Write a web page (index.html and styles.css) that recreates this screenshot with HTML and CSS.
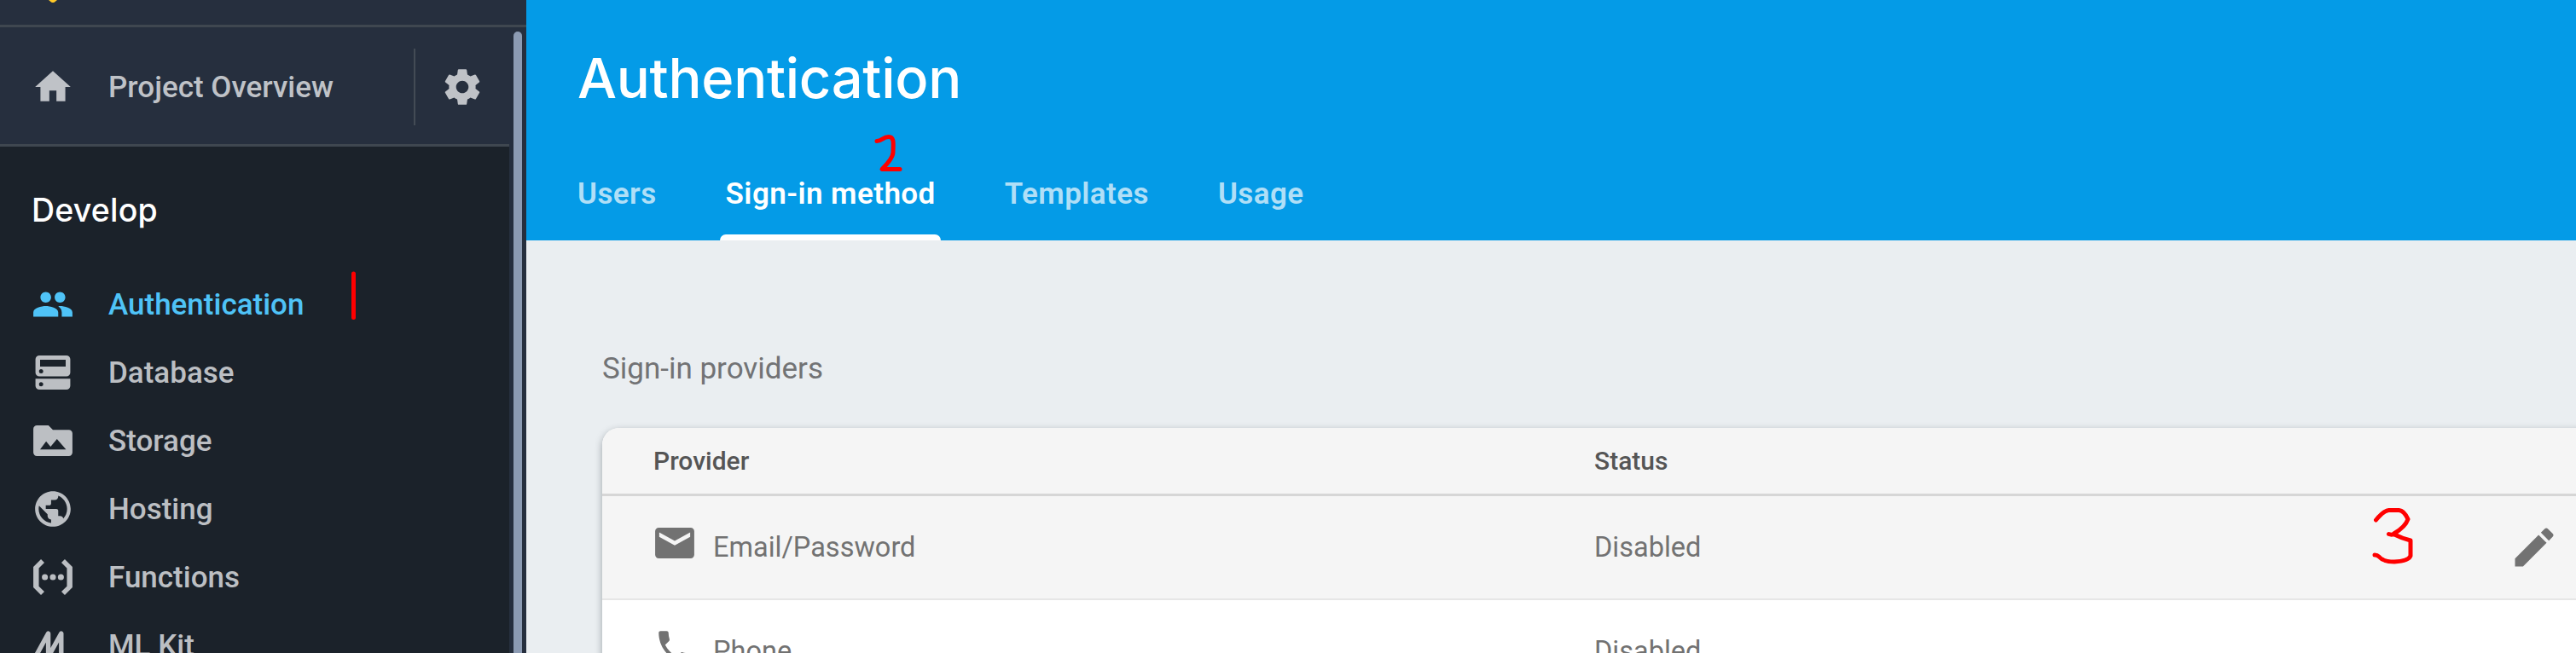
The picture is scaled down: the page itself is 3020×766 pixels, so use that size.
FILE: index.html
```html
<!DOCTYPE html>
<html lang="en">
<head>
<meta charset="utf-8">
<title>Authentication</title>
<link rel="stylesheet" href="styles.css">
</head>
<body>
<div class="app">
  <aside class="sidebar">
    <div class="brand">
      <svg class="brand-logo" viewBox="0 0 12 4"><path d="M1 0h10L8 2.4q-2 1.2-4 0z" fill="#ffc928"/></svg>
    </div>
    <div class="scroller">
      <div class="sidebar-content">
        <div class="overview">
          <svg class="icon" viewBox="0 0 24 24"><path d="M10 20v-6h4v6h5v-8h3L12 3 2 12h3v8z"/></svg>
          <span class="overview-label">Project Overview</span>
          <div class="settings">
            <svg class="icon" viewBox="0 0 24 24"><path d="M19.43 12.98c.04-.32.07-.64.07-.98s-.03-.66-.07-.98l2.11-1.65c.19-.15.24-.42.12-.64l-2-3.46c-.12-.22-.39-.3-.61-.22l-2.49 1c-.52-.4-1.08-.73-1.69-.98l-.38-2.65C14.46 2.18 14.25 2 14 2h-4c-.25 0-.46.18-.49.42l-.38 2.65c-.61.25-1.17.59-1.69.98l-2.49-1c-.23-.09-.49 0-.61.22l-2 3.46c-.13.22-.07.49.12.64l2.11 1.65c-.04.32-.07.65-.07.98s.03.66.07.98l-2.11 1.65c-.19.15-.24.42-.12.64l2 3.46c.12.22.39.3.61.22l2.49-1c.52.4 1.08.73 1.69.98l.38 2.65c.03.24.24.42.49.42h4c.25 0 .46-.18.49-.42l.38-2.65c.61-.25 1.17-.59 1.69-.98l2.49 1c.23.09.49 0 .61-.22l2-3.46c.12-.22.07-.49-.12-.64l-2.11-1.65zM12 15.5c-1.93 0-3.5-1.57-3.5-3.5s1.57-3.5 3.5-3.5 3.5 1.57 3.5 3.5-1.57 3.5-3.5 3.5z"/></svg>
          </div>
        </div>
        <h2 class="group-title">Develop</h2>
        <nav class="nav">
          <a class="nav-item active"><svg class="icon" viewBox="0 0 24 24"><path d="M16 11c1.66 0 2.99-1.34 2.99-3S17.66 5 16 5s-3 1.34-3 3 1.34 3 3 3zm-8 0c1.66 0 2.99-1.34 2.99-3S9.66 5 8 5 5 6.34 5 8s1.34 3 3 3zm0 2c-2.33 0-7 1.17-7 3.5V19h14v-2.5c0-2.33-4.67-3.5-7-3.5zm8 0c-.29 0-.62.02-.97.05 1.16.84 1.97 1.97 1.97 3.45V19h6v-2.5c0-2.33-4.67-3.5-7-3.5z"/></svg><span>Authentication</span></a>
          <a class="nav-item"><svg class="icon" viewBox="0 0 24 24"><path fill-rule="evenodd" d="M4.400 2.400h15.200a2.200 2.200 0 0 1 2.200 2.200v7.400a2.200 2.200 0 0 1-2.200 2.200H4.400a2.200 2.200 0 0 1-2.200-2.200V4.600a2.200 2.200 0 0 1 2.200-2.200zM4.800 4.800v3.800h14.400V4.800zM5.400 10.100a1.200 1.200 0 1 0 0 2.400 1.200 1.200 0 0 0 0-2.400zM2.200 15.500h19.600V19.400a2.200 2.200 0 0 1-2.200 2.200H4.400a2.200 2.200 0 0 1-2.200-2.200zM5.400 17.400a1.200 1.200 0 1 0 0 2.400 1.200 1.200 0 0 0 0-2.400z"/></svg><span>Database</span></a>
          <a class="nav-item"><svg class="icon" viewBox="0 0 24 24"><path fill-rule="evenodd" d="M3 3.400h6.500L12 5.900h9a2 2 0 0 1 2 2v10.700a2 2 0 0 1-2 2H3a2 2 0 0 1-2-2V5.400a2 2 0 0 1 2-2zM4.800 16.900h14.600l-5.100-5.800-3.600 4.300-2.500-3z"/></svg><span>Storage</span></a>
          <a class="nav-item"><svg class="icon" viewBox="0 0 24 24"><path d="M12 2C6.480 2 2 6.480 2 12s4.480 10 10 10 10-4.480 10-10S17.520 2 12 2zm-1 17.930c-3.950-.490-7-3.850-7-7.930 0-.620.080-1.210.210-1.790L9 15v1c0 1.100.900 2 2 2v1.930zm6.900-2.540c-.260-.810-1-1.390-1.900-1.390h-1v-3c0-.550-.450-1-1-1H8v-2h2c.550 0 1-.450 1-1V7h2c1.100 0 2-.900 2-2v-.410c2.930 1.190 5 4.060 5 7.410 0 2.080-.800 3.970-2.100 5.390z"/></svg><span>Hosting</span></a>
          <a class="nav-item"><svg class="icon" viewBox="0 0 24 24"><path d="M5.300 1.900 7.200 3.800 4.100 6.900v10.200l3.100 3.100-1.900 1.900L1 17.800V6.200zM18.700 1.900 16.800 3.800l3.100 3.100v10.200l-3.100 3.100 1.900 1.900 4.300-4.300V6.200z"/><circle cx="7.500" cy="12" r="1.700"/><circle cx="12" cy="12" r="1.700"/><circle cx="16.500" cy="12" r="1.700"/></svg><span>Functions</span></a>
          <a class="nav-item"><svg class="icon" viewBox="0 0 24 24"><path d="M1.800 19.200 9.400 5.300V18.500L16.700 5.300V19.500" fill="none" stroke="currentColor" stroke-width="2.600" stroke-linejoin="round" stroke-linecap="round"/></svg><span>ML Kit</span></a>
        </nav>
      </div>
      <div class="track"><div class="thumb"></div></div>
    </div>
  </aside>
  <main class="main">
    <header class="header">
      <h1 class="title">Authentication</h1>
      <div class="tabs">
        <a class="tab">Users</a>
        <a class="tab selected">Sign-in method</a>
        <a class="tab">Templates</a>
        <a class="tab">Usage</a>
      </div>
    </header>
    <section class="content">
      <h3 class="section-title">Sign-in providers</h3>
      <div class="card">
        <div class="row head"><span class="cell">Provider</span><span class="cell status">Status</span><span></span></div>
        <div class="row hovered">
          <span class="cell provider"><svg class="icon" viewBox="0 0 24 24"><path fill-rule="evenodd" d="M3 3.400h18a2 2 0 0 1 2 2v13.200a2 2 0 0 1-2 2H3a2 2 0 0 1-2-2V5.400a2 2 0 0 1 2-2zM3.300 6v2.500L12 13.300l8.700-4.800V6L12 10.800z"/></svg><span>Email/Password</span></span>
          <span class="cell status">Disabled</span>
          <svg class="edit" viewBox="0 0 24 24"><path d="M3 17.250V21h3.750L17.810 9.940l-3.750-3.750L3 17.250zM20.710 7.040c.390-.390.390-1.020 0-1.410l-2.340-2.340c-.390-.390-1.020-.390-1.410 0l-1.830 1.830 3.750 3.750 1.830-1.830z"/></svg>
        </div>
        <div class="row">
          <span class="cell provider"><svg class="icon" viewBox="0 0 24 24"><path d="M6.620 10.790c1.440 2.830 3.760 5.140 6.590 6.590l2.200-2.200c.270-.270.670-.360 1.020-.240 1.120.370 2.330.570 3.570.570.550 0 1 .450 1 1V20c0 .550-.450 1-1 1-9.390 0-17-7.610-17-17 0-.550.450-1 1-1h3.500c.550 0 1 .450 1 1 0 1.250.200 2.450.570 3.570.110.350.030.740-.250 1.020l-2.200 2.200z"/></svg><span>Phone</span></span>
          <span class="cell status">Disabled</span><span></span>
        </div>
      </div>
    </section>
  </main>
  <svg class="marks" viewBox="0 0 3020 766">
    <path d="M414.500 321v51.500"/>
    <path d="M1028 165.500c6 0 7-5 14-5 7 0 5 10 5 18 0 7-10 17-13 20h21"/>
    <path d="M2785.500 610q9-11 15-11.500h12q6 .500 10.500 10.500-3 9-16.500 17-2 2-6 .500M2806 626.500q10 5 20 7.500v18q-2 6-19 7-13 0-18-6-2-2-5-2"/>
  </svg>
</div>
</body>
</html>
```

FILE: styles.css
```css
* { box-sizing: border-box; }
body { margin: 0; font-family: Roboto, "Liberation Sans", sans-serif; overflow: hidden; }
h1, h2, h3 { margin: 0; }
.app { position: relative; display: flex; width: 3020px; height: 766px; overflow: hidden; }
.icon { width: 50px; height: 50px; fill: currentColor; flex: none; display: block; }

.sidebar { width: 617px; flex: none; display: flex; flex-direction: column; background: #262f3e; }
.brand { height: 32px; flex: none; border-bottom: 3px solid #3f4750; padding-left: 56px; }
.brand-logo { display: block; width: 12px; height: 4px; }
.scroller { flex: 1; min-height: 0; display: flex; }
.sidebar-content { width: 597px; height: 734px; overflow: hidden; background: #1b222a; color: #bcbfc3; }
.overview { height: 140px; display: flex; align-items: center; padding: 3px 0 0 37px; background: #262f3e; border-bottom: 3px solid #3f4750; color: #bfc2c7; }
.overview-label { flex: 1; padding: 2px 0 0 40px; font-size: 35px; font-weight: 500; line-height: 50px; }
.settings { width: 112px; height: 90px; border-left: 2px solid #434b55; display: flex; align-items: center; padding-left: 30px; }
.group-title { color: #fff; font-family: Inter, Roboto, sans-serif; font-size: 37.5px; font-weight: 500; line-height: 50px; padding: 50px 0 0 37px; height: 145px; letter-spacing: 0.2px; }
.nav-item { display: flex; align-items: center; height: 80px; padding-left: 37px; gap: 40px; font-size: 35px; font-weight: 500; line-height: 50px; }
.nav-item span { padding-top: 2px; }
.nav-item.active { color: #4fc3f7; }
.track { width: 20px; padding: 5px 5px 0; }
.thumb { width: 10px; height: 740px; border-radius: 5px; background: #8c9bb3; }

.main { flex: 1; min-width: 0; background: #eaeef1; }
.header { height: 282px; background: #049be7; color: #fff; padding-left: 60px; display: flex; flex-direction: column; justify-content: space-between; }
.title { font-family: Inter, Roboto, sans-serif; font-size: 65px; font-weight: 500; line-height: 80px; letter-spacing: -0.3px; padding-top: 52px; }
.tabs { display: flex; gap: 68px; margin-left: -7px; }
.tab { height: 82px; padding: 3px 6px 0 7px; font-size: 35px; font-weight: 600; line-height: 50px; letter-spacing: 0.43px; color: rgba(255,255,255,.7); }
.tab.selected { color: #fff; position: relative; }
.tab.selected::after { content: ""; position: absolute; left: 0; right: 0; bottom: 0; height: 7px; background: #fff; border-radius: 7px 7px 0 0; }
.content { padding-left: 89px; }
.section-title { font-size: 35px; font-weight: 400; line-height: 50px; color: #727375; padding-top: 126px; height: 220px; }
.card { width: 2400px; height: 400px; background: #fff; border-radius: 20px 0 0 0; box-shadow: 0 3px 8px rgba(40,50,60,.4); overflow: hidden; color: #727272; }
.row { display: grid; grid-template-columns: 1103px 1072px 60px; align-items: center; height: 122px; padding-left: 60px; border-bottom: 2px solid #e6e6e6; font-size: 32.5px; line-height: 50px; }
.head { height: 80px; background: #f5f5f5; border-bottom: 3px solid #d6d6d6; font-size: 30px; font-weight: 500; color: #555; line-height: 40px; }
.hovered { background: #f5f5f5; }
.provider { display: flex; align-items: center; gap: 20px; }
.provider .icon { margin: -5px 0 5px; }
.edit { width: 60px; height: 60px; margin-top: -1px; fill: #727272; }

.marks { position: absolute; left: 0; top: 0; width: 3020px; height: 766px; fill: none; stroke: #f00; stroke-width: 5; stroke-linecap: round; stroke-linejoin: round; pointer-events: none; }
```
